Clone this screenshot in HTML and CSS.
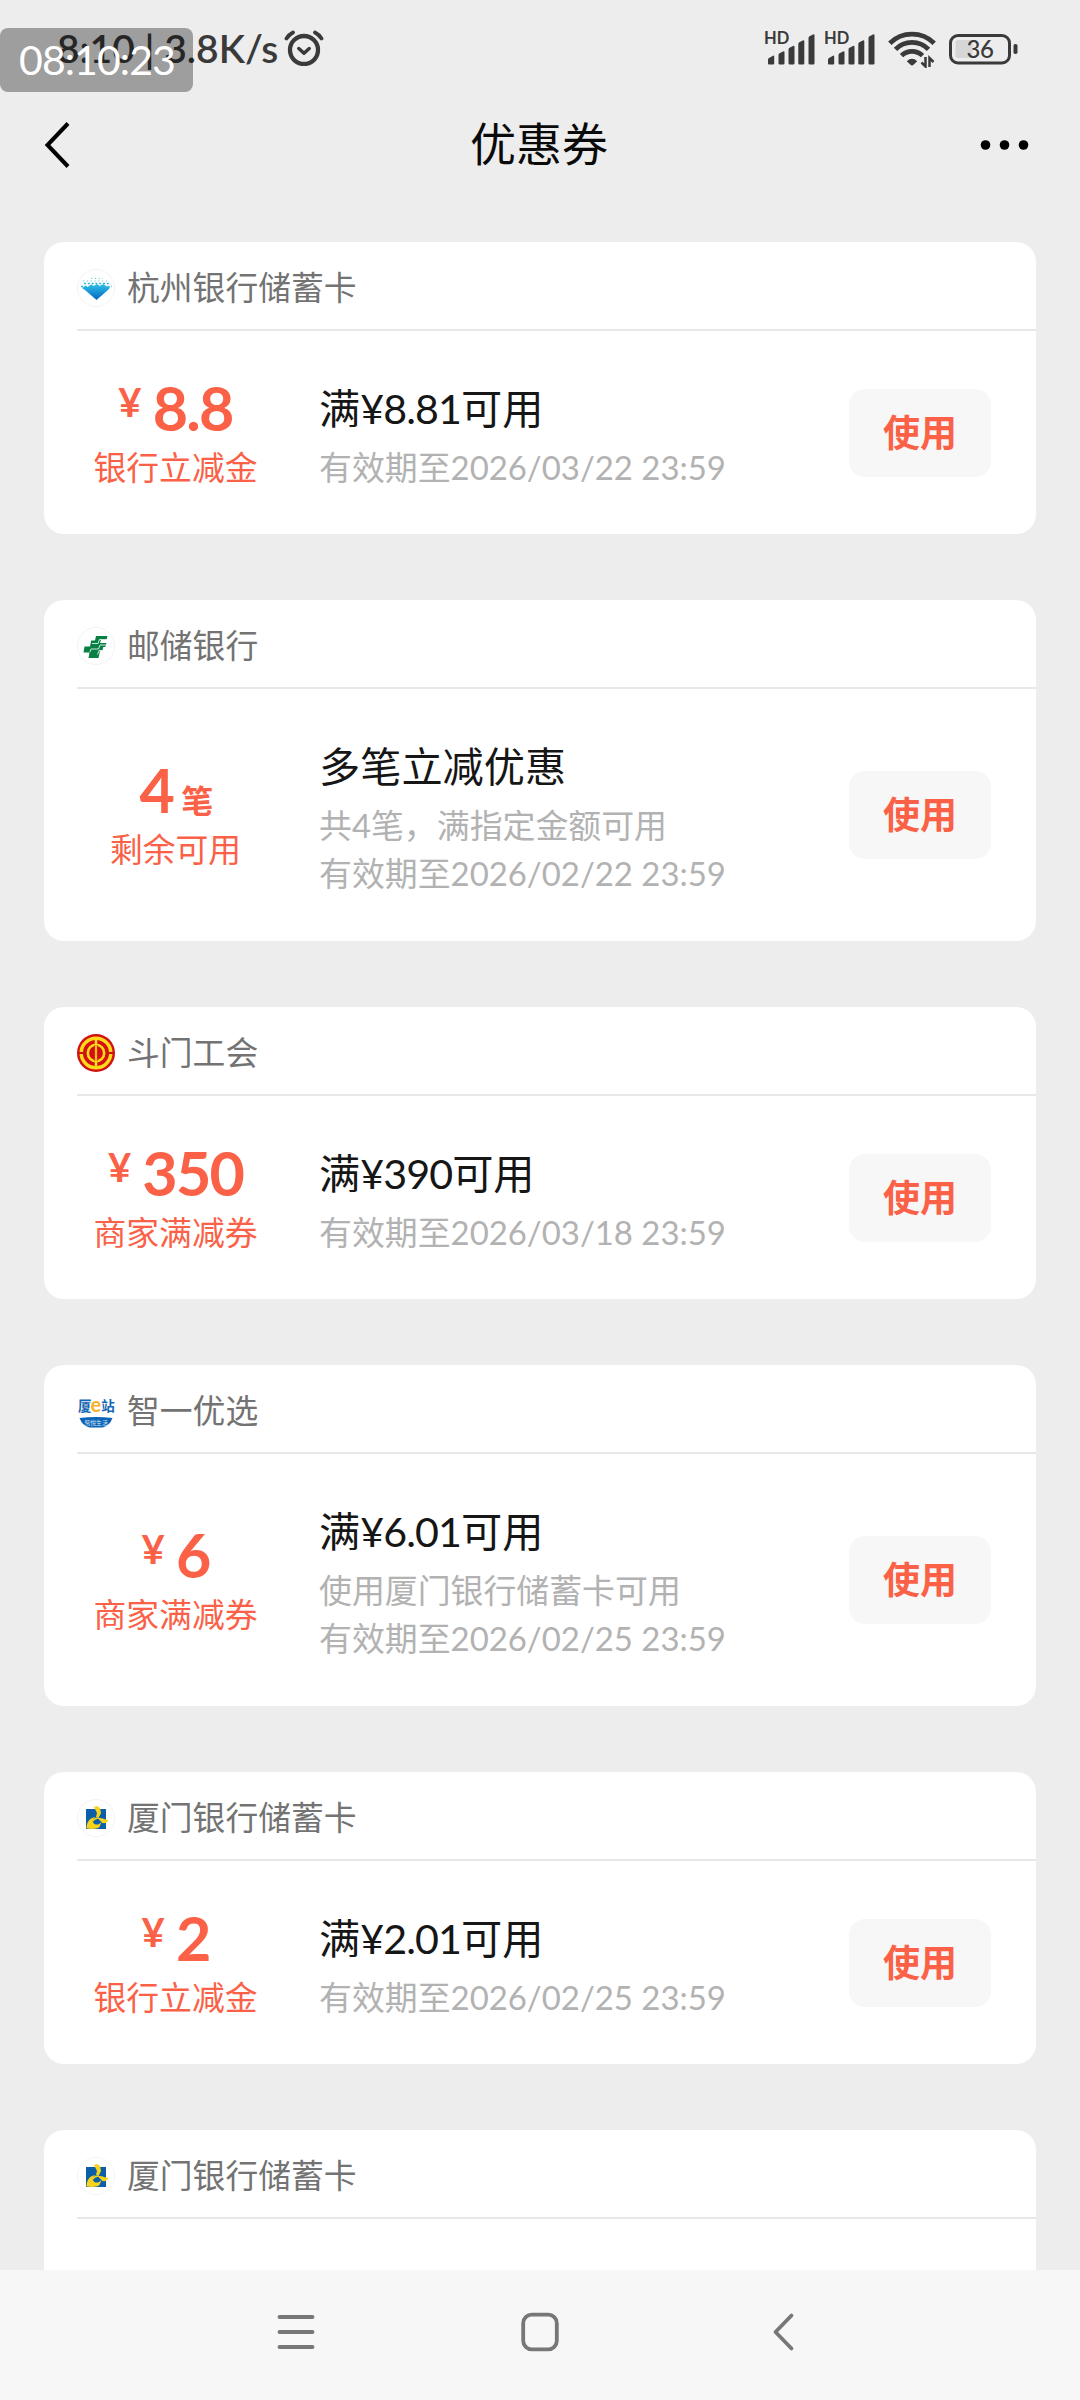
FILE: index.html
```html
<!DOCTYPE html>
<html lang="zh-CN">
<head>
<meta charset="utf-8">
<title>优惠券</title>
<link rel="stylesheet" href="styles.css">
</head>
<body>
<svg class="defs" aria-hidden="true">
  <symbol id="bars" viewBox="0 0 54 36">
    <path d="M3 33.500v-4q0-1 1-1.600l4-2.200q1.200-.4 1.200 1v6.800q0 1-1 1H4q-1 0-1-1zM13.500 25q0-1.500 1.500-2l3-1.600q1.500-.5 1.500 1v10.800q0 1.300-1.300 1.300h-3.400q-1.300 0-1.300-1.300zM23.500 19.500q0-1.500 1.500-2l3-1.600q1.500-.5 1.500 1v16.300q0 1.300-1.300 1.300h-3.400q-1.300 0-1.300-1.300zM33.300 14q0-1.500 1.500-2l3-1.600q1.500-.5 1.500 1v21.800q0 1.300-1.300 1.300h-3.400q-1.300 0-1.300-1.300zM43.500 8q0-1.500 1.500-2l3-1.600q1.500-.5 1.500 1v27.800q0 1.300-1.300 1.300h-3.400q-1.300 0-1.300-1.300z" fill="currentColor"/>
  </symbol>
  <symbol id="xm-bank" viewBox="0 0 38 38">
    <circle cx="19" cy="19" r="18.500" fill="#fff" stroke="#f3f3f3"/>
    <rect x="9" y="10" width="20" height="20" fill="#0a5fa8"/>
    <path d="M17 8l3-1 3 2 1 5-2 4h-3l1-4z" fill="#f8d31c"/>
    <path d="M9.500 29.500c0-6 3-11 9-11.500-3 2-3.500 5-1 7 3 1.500 5 0 7-2l-2 5c-3 2.500-9 2-13 1.500z" fill="#f8d31c"/>
    <path d="M21 19.500c3-1.500 5 1 10.500 1.500-1 2.500-3 3.500-6 3z" fill="#f8d31c"/>
    <path d="M16 22q2-3.500 6-3" fill="none" stroke="#f8d31c" stroke-width="1.500"/>
  </symbol>
</svg>

<header class="status">
  <span class="status-text">8:10 | 3.8K/s</span>
  <svg class="alarm" viewBox="0 0 40 36" width="40" height="36">
    <g fill="none" stroke="currentColor" stroke-linecap="round">
      <circle cx="20" cy="20" r="14" stroke-width="4.300"/>
      <path d="M14.800 18.500l5.200 4.700 5.200-4.700" stroke-width="3.500" stroke-linejoin="round"/>
      <path d="M2.500 8.500Q5 4.500 9 2.500M37.500 8.500Q35 4.500 31 2.500" stroke-width="3.800"/>
    </g>
  </svg>
  <div class="status-icons">
    <svg class="signal" viewBox="0 0 54 36" width="54" height="36"><text class="hd" x="-1" y="13.500">HD</text><use href="#bars"/></svg>
    <svg class="signal" viewBox="0 0 54 36" width="54" height="36"><text class="hd" x="-1" y="13.500">HD</text><use href="#bars"/></svg>
    <svg class="wifi" viewBox="0 0 48 38" width="48" height="38">
      <g fill="none" stroke="currentColor" stroke-width="4.800">
        <path d="M1.800 13.200A31.500 31.500 0 0 1 46.200 13.200"/>
        <path d="M7.500 19.300A23 23 0 0 1 40.500 19.300"/>
        <path d="M13.500 25.600A15 15 0 0 1 34.500 25.600"/>
      </g>
      <path d="M18.800 31.200Q24 26.500 29.200 31.200L25.500 34.800Q24 36 22.500 34.800z" fill="currentColor"/>
      <path d="M37.500 27v9.500L33.500 32.500M41.500 37V28L45.500 32" fill="none" stroke="currentColor" stroke-width="2.500"/>
    </svg>
    <svg class="battery" viewBox="0 0 72 32" width="72" height="32">
      <rect x="7.500" y="7" width="17" height="18" rx="2.500" fill="#d6d6d6"/>
      <rect x="2.500" y="2.500" width="59" height="27.500" rx="7.500" fill="none" stroke="currentColor" stroke-width="3"/>
      <rect x="65.500" y="11" width="4" height="10" rx="1.800" fill="currentColor"/>
      <text class="level" x="32" y="25">36</text>
    </svg>
  </div>
  <div class="clock">08:10:23</div>
</header>

<nav class="titlebar">
  <svg viewBox="0 0 30 50" width="30" height="50"><path d="M26 3.500L5.500 25 26 46.500" fill="none" stroke="#000" stroke-width="4"/></svg>
  <h1>优惠券</h1>
  <svg viewBox="0 0 50 12" width="50" height="12"><circle cx="5.500" cy="6" r="4.800"/><circle cx="24.500" cy="6" r="4.800"/><circle cx="43.500" cy="6" r="4.800"/></svg>
</nav>

<main class="list">
  <section class="card">
    <div class="card-head">
      <svg class="logo" viewBox="0 0 38 38">
        <defs><linearGradient id="hz" x1="0" y1="0" x2="0" y2="1"><stop offset="0" stop-color="#2fc0e8"/><stop offset="1" stop-color="#0365c0"/></linearGradient></defs>
        <circle cx="19" cy="19" r="18.500" fill="#fff" stroke="#f3f3f3"/>
        <path d="M5 19l3-2 3 1 3-2.500 3 1.500 3-2 3 2 3-2 3 2 4 1.500-2 2.500-11.500 10L8 21z" fill="url(#hz)"/>
        <path d="M4 17.500h31M7 14.500h26" stroke="#2fb4d8" stroke-width="1.600" stroke-dasharray="2 1.800"/>
        <path d="M6 12h25M14 9.500h12" stroke="#6ecfd8" stroke-width="1.200" stroke-dasharray="1.200 2.600"/>
      </svg>
      <span>杭州银行储蓄卡</span>
    </div>
    <div class="card-body">
      <div class="value">
        <div class="amount"><span class="yen">¥</span><span>8.8</span></div>
        <div class="kind">银行立减金</div>
      </div>
      <div class="info"><h2>满<span class="num">¥8.81</span>可用</h2><p>有效期至<span class="date">2026/03/22 23:59</span></p></div>
      <button class="use">使用</button>
    </div>
  </section>

  <section class="card tall">
    <div class="card-head">
      <svg class="logo" viewBox="0 0 38 38">
        <circle cx="19" cy="19" r="18.500" fill="#fff" stroke="#f3f3f3"/>
        <path d="M19 9h11.500l-1 4H24l-1 3h6.500l-1.200 4h-2l-1 4H23l-1.500 7h-10l1-5.500H6.500l1-6H13l1.200-6H18z" fill="#088044"/>
        <path d="M30 12.500h-7.500l-1.500 4h-6M29 18h-6l-1.500 4H14l-1 3M26 23.500h-4l-1.500 4" fill="none" stroke="#fff" stroke-width=".8"/>
      </svg>
      <span>邮储银行</span>
    </div>
    <div class="card-body">
      <div class="value">
        <div class="amount"><span>4</span><span class="unit">笔</span></div>
        <div class="kind">剩余可用</div>
      </div>
      <div class="info"><h2>多笔立减优惠</h2><p>共4笔，满指定金额可用</p><p>有效期至<span class="date">2026/02/22 23:59</span></p></div>
      <button class="use">使用</button>
    </div>
  </section>

  <section class="card">
    <div class="card-head">
      <svg class="logo" viewBox="0 0 38 38">
        <circle cx="19" cy="19" r="19" fill="#d20f12"/>
        <g fill="none" stroke="#ffd91a">
          <circle cx="19" cy="19" r="14.800" stroke-width="3.500"/>
          <circle cx="19" cy="19" r="8.200" stroke-width="2.600"/>
          <path d="M19 6v26" stroke-width="2.600"/>
        </g>
        <path d="M1 19h6M31 19h6" stroke="#d20f12" stroke-width="1.800"/>
        <path d="M17.700 11v16M20.300 11v16" stroke="#d20f12" stroke-width=".7"/>
      </svg>
      <span>斗门工会</span>
    </div>
    <div class="card-body">
      <div class="value">
        <div class="amount"><span class="yen">¥</span><span>350</span></div>
        <div class="kind">商家满减券</div>
      </div>
      <div class="info"><h2>满<span class="num">¥390</span>可用</h2><p>有效期至<span class="date">2026/03/18 23:59</span></p></div>
      <button class="use">使用</button>
    </div>
  </section>

  <section class="card tall">
    <div class="card-head">
      <svg class="logo" viewBox="0 0 38 38">
        <path d="M2.500 26q16.500-2 33 0-3 8-10 9.500h-13Q5.500 34 2.500 26z" fill="#0c62b4"/>
        <text class="logo-blue" x="1" y="19">厦</text>
        <text class="logo-e" x="13.500" y="19.500">e</text>
        <text class="logo-blue" x="24.300" y="19">站</text>
        <text class="logo-sub" x="7.500" y="32.500">鹭悦生活</text>
      </svg>
      <span>智一优选</span>
    </div>
    <div class="card-body">
      <div class="value">
        <div class="amount"><span class="yen">¥</span><span>6</span></div>
        <div class="kind">商家满减券</div>
      </div>
      <div class="info"><h2>满<span class="num">¥6.01</span>可用</h2><p>使用厦门银行储蓄卡可用</p><p>有效期至<span class="date">2026/02/25 23:59</span></p></div>
      <button class="use">使用</button>
    </div>
  </section>

  <section class="card">
    <div class="card-head">
      <svg class="logo"><use href="#xm-bank"/></svg>
      <span>厦门银行储蓄卡</span>
    </div>
    <div class="card-body">
      <div class="value">
        <div class="amount"><span class="yen">¥</span><span>2</span></div>
        <div class="kind">银行立减金</div>
      </div>
      <div class="info"><h2>满<span class="num">¥2.01</span>可用</h2><p>有效期至<span class="date">2026/02/25 23:59</span></p></div>
      <button class="use">使用</button>
    </div>
  </section>

  <section class="card">
    <div class="card-head">
      <svg class="logo"><use href="#xm-bank"/></svg>
      <span>厦门银行储蓄卡</span>
    </div>
  </section>
</main>

<footer class="sysnav">
  <svg viewBox="0 0 40 40" width="40" height="40"><path d="M3.500 5h33M3.500 20h33M3.500 35h33"/></svg>
  <svg viewBox="0 0 40 40" width="40" height="40"><rect x="3.200" y="2.700" width="33.600" height="34.600" rx="8.500"/></svg>
  <svg viewBox="0 0 40 40" width="40" height="40"><path d="M27.500 3.500L11.500 20l16 16.500"/></svg>
</footer>
</body>
</html>
```
FILE: styles.css
```css
* { box-sizing: border-box; }

body {
  margin: 0;
  width: 1080px;
  height: 2400px;
  overflow: hidden;
  display: flex;
  flex-direction: column;
  background: #ededed;
  font-family: "Lato", "Noto Sans CJK SC", sans-serif;
}

h1, h2, p { margin: 0; font-weight: 400; }
svg { display: block; flex: none; }
.defs { position: absolute; width: 0; height: 0; }

/* status bar */
.status {
  position: relative;
  flex: none;
  height: 80px;
  padding: 28px 60px 0 57px;
  display: flex;
  align-items: flex-start;
  color: #3a3a3a;
}
.status-text {
  width: 227px;
  font-size: 39px;
  line-height: 40px;
  font-weight: 600;
  white-space: pre;
}
.alarm { margin-top: 2px; }
.status-icons { display: flex; margin-left: auto; }
.signal { margin: 2px 6px 0 0; overflow: visible; }
.hd { font: 700 16.500px "Lato", sans-serif; fill: currentColor; }
.wifi { margin: 2px 12px 0 3px; }
.battery { margin-top: 5px; }
.level { font: 500 24px "Lato", sans-serif; letter-spacing: -.5px; fill: currentColor; text-anchor: middle; }
.clock {
  position: absolute;
  left: 0;
  top: 28px;
  width: 193px;
  height: 64px;
  padding-left: 19px;
  border-radius: 8px;
  background: rgba(0, 0, 0, .335);
  color: #fff;
  font-size: 41px;
  line-height: 64px;
  letter-spacing: -.9px;
  white-space: nowrap;
}

/* title bar */
.titlebar {
  flex: none;
  height: 130px;
  padding: 0 50px 0 42px;
  display: flex;
  align-items: center;
  justify-content: space-between;
}
.titlebar h1 { font-size: 46px; line-height: 64px; padding: 0 0 3px 26px; color: #0a0a0a; }

/* coupons */
.list {
  flex: 1;
  min-height: 0;
  overflow: hidden;
  padding: 32px 44px 0;
  display: flex;
  flex-direction: column;
  gap: 66px;
}
.card {
  flex: none;
  height: 292px;
  display: flex;
  flex-direction: column;
  padding-left: 33px;
  border-radius: 20px;
  background: #fff;
}
.card.tall { height: 341px; }
.card-head {
  flex: none;
  height: 89px;
  display: flex;
  align-items: center;
  gap: 12px;
  border-bottom: 2px solid #e8e8e8;
  color: #737373;
  font-size: 32.8px;
}
.logo { width: 38px; height: 38px; margin-top: 5px; overflow: visible; }
.logo-blue { font: 700 13.500px "Noto Sans CJK SC", sans-serif; fill: #1567b3; }
.logo-e { font: 700 20px "Lato", sans-serif; fill: #f7b02a; }
.logo-sub { font: 400 5.800px "Noto Sans CJK SC", sans-serif; fill: #cfe3f5; }
.card-body {
  flex: 1;
  display: flex;
  align-items: center;
  padding-right: 45px;
}
.value {
  width: 197px;
  padding-bottom: 2px;
  text-align: center;
  color: #fa6147;
}
.amount {
  height: 72px;
  display: flex;
  justify-content: center;
  align-items: baseline;
  font-size: 61px;
  line-height: 71px;
  font-weight: 700;
  letter-spacing: -1.8px;
}
.yen { font-size: 40px; line-height: 40px; margin-right: 13px; position: relative; top: -14px; }
.unit { font-size: 32px; line-height: 40px; margin-left: 8px; }
.kind { font-size: 32.8px; line-height: 48px; }
.info { flex: 1; padding: 0 0 2px 45px; white-space: nowrap; }
.info h2 { font-size: 41.2px; line-height: 72px; color: #161616; }
.num { letter-spacing: -.9px; }
.info p { font-size: 32.9px; line-height: 48px; color: #b2b2b2; }
.use {
  width: 142px;
  height: 88px;
  border: 0;
  border-radius: 16px;
  background: #f7f7f7;
  color: #fa6147;
  font: 700 37px/86px "Lato", "Noto Sans CJK SC", sans-serif;
  padding: 0;
}

/* system navigation */
.sysnav {
  flex: none;
  height: 130px;
  padding: 0 276px 6px;
  display: flex;
  align-items: center;
  justify-content: space-between;
  background: #f7f7f7;
}
.sysnav svg { fill: none; stroke: #777; stroke-width: 3.800; stroke-linecap: round; stroke-linejoin: round; }
```
